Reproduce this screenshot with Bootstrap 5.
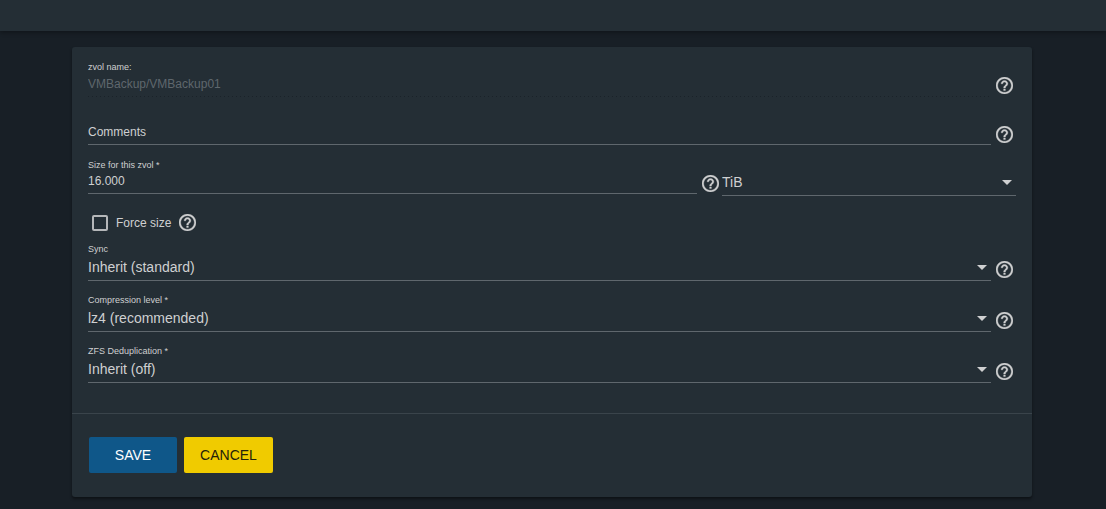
<!DOCTYPE html>
<html lang="en">
<head>
<meta charset="utf-8">
<meta name="viewport" content="width=device-width, initial-scale=1">
<title>Edit Zvol</title>
<link href="https://cdn.jsdelivr.net/npm/bootstrap@5.3.0/dist/css/bootstrap.min.css" rel="stylesheet">
<style>
  body { background: #181f26; color: #cfd0d1; font-family: "Liberation Sans", Arial, sans-serif; font-size: 12px; line-height: 16px; }
  .topbar { height: 31px; background: #242e35; box-shadow: 0 2px 4px rgba(0,0,0,.3); }
  .page { padding: 16px 74px 12px 72px; }
  .panel { background: #242e35; border-radius: 3px; box-shadow: 0 2px 3px rgba(0,0,0,.45); }
  .fields { padding: 14px 16px 30px; }
  .field { min-width: 0; border-bottom: 1px solid #5f676d; }
  .field label { display: block; font-size: 9px; line-height: 12px; }
  .field input, .field select { display: block; width: 100%; padding: 0; border: 0; outline: 0; background: transparent; color: inherit; font-size: 12px; line-height: 16px; height: 22px; }
  .field input { padding-bottom: 3px; }
  .field select { appearance: none; font-size: 14px; line-height: 20px; height: 25px; padding: 0 0 1px; }
  .field select option { background: #242e35; }
  .field input::placeholder { color: inherit; opacity: 1; }
  .field-off { border-bottom: 0; background: repeating-linear-gradient(90deg, #1a2229 0 1px, transparent 1px 4px) bottom / 100% 1px no-repeat; }
  .field-off input { color: #5f676d; height: 24px; padding-bottom: 3px; }
  .name-row { margin-bottom: 25px; }
  .size-row { padding-top: 14px; }
  .size-row .size-part { margin-bottom: 2px; }
  .unit { flex: 0 0 294px; }
  .force-row { padding: 18px 4px 12px; }
  .pick { position: relative; }
  .pick .caret { position: absolute; right: 4px; top: 10px; width: 10px; height: 5px; fill: #cfd0d1; pointer-events: none; }
  .side { width: 25px; padding: 0 0 3px 5px; flex: none; }
  .side-text { padding-bottom: 2px; }
  .help { display: block; width: 17px; height: 17px; fill: #cfd0d1; stroke: #cfd0d1; stroke-width: .4; overflow: visible; }
  .list-row { margin-bottom: 13px; }
  .tick { appearance: none; width: 16px; height: 16px; margin: 0; border: 2px solid #b5b7b9; border-radius: 2px; background: transparent; }
  .tick:checked { background: #0f5789; }
  .actions { border-top: 1px solid #3a444b; padding: 23px 17px 24px; gap: 7px; }
  .act { height: 36px; border: 0; border-radius: 2px; padding: 0; font-size: 14px; line-height: 36px; }
  .act-save { width: 88px; background: #0f5789; color: #fff; }
  .act-cancel { width: 89px; background: #f0cb00; color: #24220a; }
</style>
</head>
<body>
<svg class="d-none" aria-hidden="true">
  <symbol id="help" viewBox="2 2 20 20"><path d="M11 18h2v-2h-2v2zm1-16C6.480 2 2 6.480 2 12s4.480 10 10 10 10-4.480 10-10S17.520 2 12 2zm0 18c-4.410 0-8-3.590-8-8s3.590-8 8-8 8 3.590 8 8-3.590 8-8 8zm0-14c-2.210 0-4 1.790-4 4h2c0-1.100.900-2 2-2s2 .900 2 2c0 2-3 1.750-3 5h2c0-2.250 3-2.500 3-5 0-2.210-1.790-4-4-4z"/></symbol>
  <symbol id="caret" viewBox="0 0 10 5"><path d="M0 0h10L5 5z"/></symbol>
</svg>
<header class="topbar"></header>
<main class="page">
  <form class="panel">
    <div class="fields">
      <div class="d-flex align-items-end name-row">
        <div class="field field-off flex-grow-1">
          <label for="name">zvol name:</label>
          <input id="name" type="text" value="VMBackup/VMBackup01" disabled>
        </div>
        <div class="side"><svg class="help"><use href="#help"/></svg></div>
      </div>
      <div class="d-flex align-items-end">
        <div class="field flex-grow-1">
          <input id="comments" type="text" placeholder="Comments" aria-label="Comments">
        </div>
        <div class="side side-text"><svg class="help"><use href="#help"/></svg></div>
      </div>
      <div class="d-flex align-items-end size-row">
        <div class="field flex-grow-1 size-part">
          <label for="size">Size for this zvol *</label>
          <input id="size" type="text" value="16.000">
        </div>
        <div class="side side-text size-part"><svg class="help"><use href="#help"/></svg></div>
        <div class="field pick unit">
          <select aria-label="Unit"><option>TiB</option><option>GiB</option><option>MiB</option></select>
          <svg class="caret"><use href="#caret"/></svg>
        </div>
      </div>
      <div class="d-flex align-items-center gap-2 force-row">
        <input class="tick" type="checkbox" id="force">
        <label for="force">Force size</label>
        <svg class="help"><use href="#help"/></svg>
      </div>
      <div class="d-flex align-items-end list-row">
        <div class="flex-grow-1 field">
          <label for="sync">Sync</label>
          <div class="pick"><select id="sync"><option>Inherit (standard)</option><option>Standard</option><option>Always</option><option>Disabled</option></select><svg class="caret"><use href="#caret"/></svg></div>
        </div>
        <div class="side"><svg class="help"><use href="#help"/></svg></div>
      </div>
      <div class="d-flex align-items-end list-row">
        <div class="flex-grow-1 field">
          <label for="level">Compression level *</label>
          <div class="pick"><select id="level"><option>lz4 (recommended)</option><option>Off</option></select><svg class="caret"><use href="#caret"/></svg></div>
        </div>
        <div class="side"><svg class="help"><use href="#help"/></svg></div>
      </div>
      <div class="d-flex align-items-end">
        <div class="flex-grow-1 field">
          <label for="dedup">ZFS Deduplication *</label>
          <div class="pick"><select id="dedup"><option>Inherit (off)</option><option>On</option><option>Off</option></select><svg class="caret"><use href="#caret"/></svg></div>
        </div>
        <div class="side"><svg class="help"><use href="#help"/></svg></div>
      </div>
    </div>
    <div class="actions d-flex">
      <button type="submit" class="act act-save">SAVE</button>
      <button type="button" class="act act-cancel">CANCEL</button>
    </div>
  </form>
</main>
<script src="https://cdn.jsdelivr.net/npm/bootstrap@5.3.0/dist/js/bootstrap.bundle.min.js"></script>
</body>
</html>
